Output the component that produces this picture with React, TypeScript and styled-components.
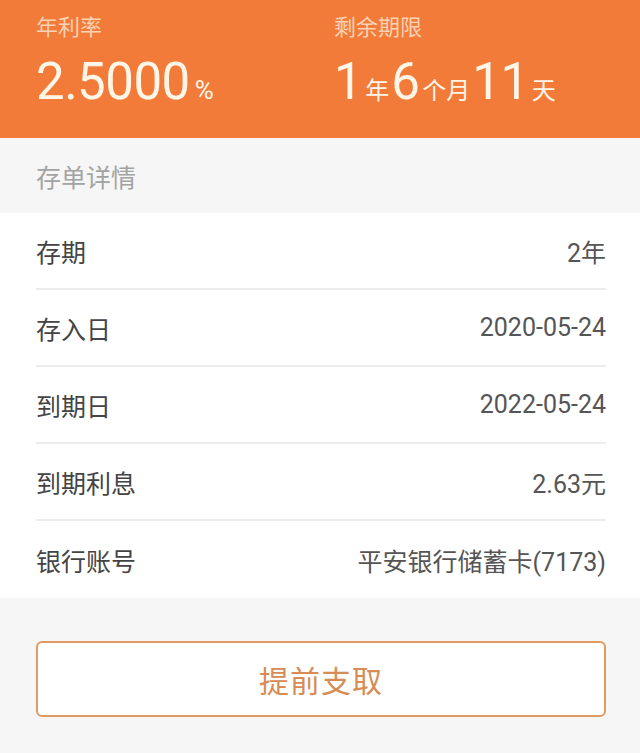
import React from "react";
import { createGlobalStyle, styled } from "styled-components";

const GlobalST = createGlobalStyle`
    html, body {
        margin: 0;
        padding: 0;
        background: #f6f6f6;
    }
    body {
        font-family: Roboto, "Noto Sans CJK SC", sans-serif;
    }
`;

const PageST = styled.div`
    width: 640px;
    height: 753px;
    background: #f6f6f6;
    overflow: hidden;
`;

const HeaderST = styled.div`
    height: 138px;
    background: #f27b39;
    display: flex;
    padding: 14px 0 0 36px;
    box-sizing: border-box;
`;

const StatST = styled.div<{ $width: number }>`
    width: ${(p) => p.$width}px;
    display: flex;
    flex-direction: column;
`;

const StatLabelST = styled.div`
    font-size: 22px;
    line-height: 28px;
    color: #fbd2b3;
`;

const StatValueST = styled.div`
    margin-top: 10px;
    display: flex;
    align-items: baseline;
    color: #fff6e8;
    white-space: nowrap;
`;

const BigST = styled.span`
    font-family: Roboto, sans-serif;
    font-size: 51px;
    line-height: 60px;
    letter-spacing: -0.5px;
`;

const UnitST = styled.span`
    font-size: 24px;
    margin: 0 2px 0 3px;
`;

const PercentST = styled(UnitST)`
    font-size: 26px;
    margin-left: 5px;
`;

const SectionTitleST = styled.div`
    height: 75px;
    padding-left: 36px;
    display: flex;
    align-items: center;
    font-size: 25px;
    color: #a3a3a3;
    background: #f6f6f6;
`;

const ListST = styled.div`
    background: #fff;
    padding: 0 34px 0 36px;
`;

const RowST = styled.div<{ $last?: boolean }>`
    height: 77px;
    display: flex;
    align-items: center;
    justify-content: space-between;
    font-size: 25px;
    color: #444;
    border-bottom: ${(p) => (p.$last ? "none" : "2px solid #ececec")};
    box-sizing: border-box;
`;

const ValueST = styled.span`
    color: #555;
`;

const FooterST = styled.div`
    padding: 43px 34px 0 36px;
`;

const ButtonST = styled.button`
    width: 100%;
    height: 76px;
    background: #fff;
    border: 2px solid #e09a64;
    border-radius: 6px;
    font-family: "Noto Sans CJK SC", sans-serif;
    font-size: 30px;
    color: #d68c54;
    letter-spacing: 1px;
`;

const rows = [
    { label: "存期", value: "2年" },
    { label: "存入日", value: "2020-05-24" },
    { label: "到期日", value: "2022-05-24" },
    { label: "到期利息", value: "2.63元" },
    { label: "银行账号", value: "平安银行储蓄卡(7173)" },
];

export default function App() {
    return (
        <>
            <GlobalST />
            <PageST>
                <HeaderST>
                    <StatST $width={298}>
                        <StatLabelST>年利率</StatLabelST>
                        <StatValueST>
                            <BigST>2.5000</BigST>
                            <PercentST>%</PercentST>
                        </StatValueST>
                    </StatST>
                    <StatST $width={300}>
                        <StatLabelST>剩余期限</StatLabelST>
                        <StatValueST>
                            <BigST>1</BigST>
                            <UnitST>年</UnitST>
                            <BigST>6</BigST>
                            <UnitST>个月</UnitST>
                            <BigST>11</BigST>
                            <UnitST>天</UnitST>
                        </StatValueST>
                    </StatST>
                </HeaderST>
                <SectionTitleST>存单详情</SectionTitleST>
                <ListST>
                    {rows.map((r, i) => (
                        <RowST key={r.label} $last={i === rows.length - 1}>
                            <span>{r.label}</span>
                            <ValueST>{r.value}</ValueST>
                        </RowST>
                    ))}
                </ListST>
                <FooterST>
                    <ButtonST>提前支取</ButtonST>
                </FooterST>
            </PageST>
        </>
    );
}
